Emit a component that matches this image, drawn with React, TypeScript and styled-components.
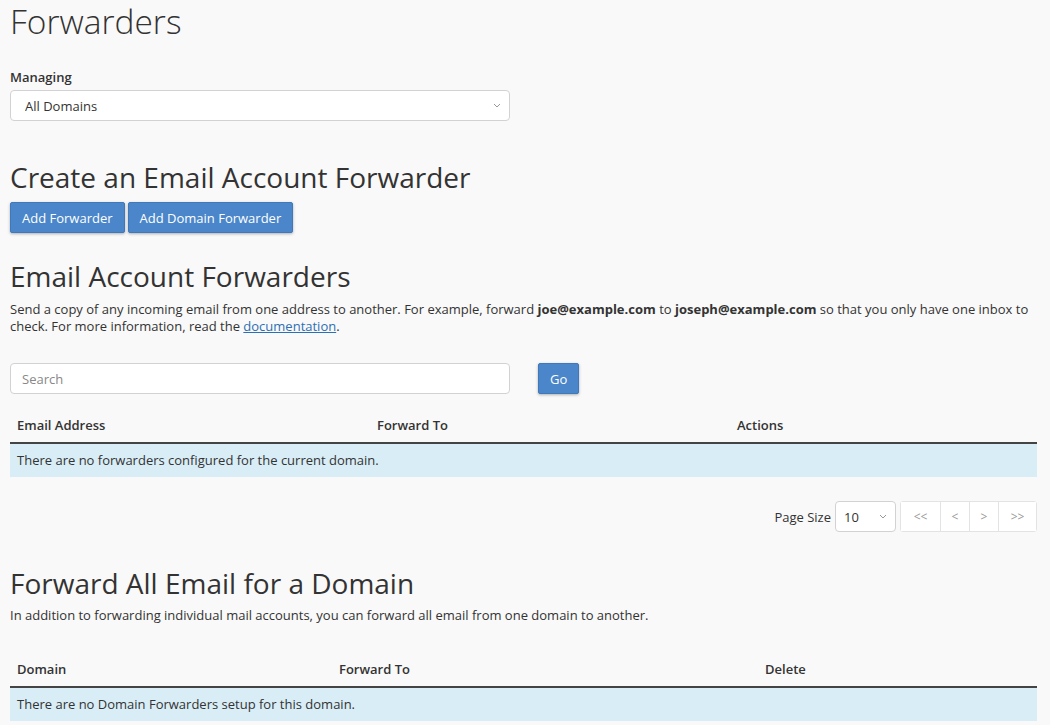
import React, { useState } from 'react';
import styled, { createGlobalStyle } from 'styled-components';

const GlobalStyle = createGlobalStyle`
  html, body {
    margin: 0;
    padding: 0;
    background-color: #f9f9f9;
    color: #333;
    font-family: "Open Sans", "Noto Sans", Arial, sans-serif;
    font-size: 13px;
  }
  * { box-sizing: border-box; }
`;

const Page = styled.main`
  width: 1027px;
  margin-left: 10px;
  padding-top: 1px;
`;

const Title = styled.h1`
  margin: 0;
  font-size: 33.5px;
  font-weight: 300;
  line-height: 41px;
`;

const Field = styled.div`
  margin-top: 26px;
  display: flex;
  flex-direction: column;
  gap: 4px;
`;

const Label = styled.label`
  font-weight: 600;
  line-height: 18px;
`;

const Select = styled.select<{ $width: number }>`
  appearance: none;
  width: ${p => p.$width}px;
  height: 31px;
  padding: 0 24px 0 ${p => (p.$width > 100 ? 14 : 8)}px;
  border: 1px solid #d2d2d2;
  border-radius: 4px;
  background-color: #fff;
  background-image: url("data:image/svg+xml,%3Csvg xmlns='http://www.w3.org/2000/svg' width='8' height='5' viewBox='0 0 8 5'%3E%3Cpath d='M1 1l3 3 3-3' fill='none' stroke='%23999' stroke-width='1'/%3E%3C/svg%3E");
  background-repeat: no-repeat;
  background-position: right 8px center;
  color: #333;
  font-family: inherit;
  font-size: 13px;
`;

const Heading = styled.h2<{ $top: number }>`
  margin: ${p => p.$top}px 0 0;
  font-size: 28px;
  font-weight: 400;
  line-height: 31px;
`;

const ButtonRow = styled.div`
  display: flex;
  gap: 3px;
  margin-top: 9px;
`;

const PrimaryButton = styled.button`
  height: 31px;
  padding: 0 11px;
  border: 1px solid #3f79bb;
  border-radius: 2px;
  background-color: #4a86c9;
  color: #fff;
  font-family: inherit;
  font-size: 13px;
  box-shadow: 0 1px 3px rgba(0, 0, 0, 0.3);
  cursor: pointer;
`;

const Text = styled.p<{ $top: number }>`
  margin: ${p => p.$top}px 0 0;
  line-height: 17px;
`;

const Link = styled.a`
  color: #2d6fb4;
  text-decoration: underline;
`;

const SearchRow = styled.div`
  display: flex;
  align-items: center;
  gap: 28px;
  margin-top: 28px;
`;

const SearchInput = styled.input`
  width: 500px;
  height: 31px;
  padding: 0 11px;
  border: 1px solid #d2d2d2;
  border-radius: 4px;
  background: #fff;
  font-family: inherit;
  font-size: 13px;
  color: #333;
  &::placeholder { color: #888; }
`;

const Table = styled.table<{ $top: number }>`
  width: 100%;
  margin-top: ${p => p.$top}px;
  border-collapse: collapse;
  table-layout: fixed;
`;

const Th = styled.th<{ $width?: number }>`
  width: ${p => (p.$width ? `${p.$width}px` : 'auto')};
  text-align: left;
  font-weight: 600;
  padding: 9px 7px 8px;
  line-height: 18px;
  border-bottom: 2px solid #444;
`;

const EmptyCell = styled.td`
  background-color: #d9edf7;
  padding: 7px 7px 8px;
  line-height: 18px;
`;

const Pager = styled.div`
  display: flex;
  justify-content: flex-end;
  align-items: center;
  margin-top: 24px;
`;

const PageLabel = styled.span`
  margin-right: 4px;
`;

const PagerGroup = styled.div`
  display: flex;
  margin-left: 4px;
  border: 1px solid #e3e3e3;
  border-radius: 3px;
  background: #fff;
`;

const PagerButton = styled.button<{ $width: number }>`
  width: ${p => p.$width}px;
  height: 29px;
  border: none;
  border-left: 1px solid #e3e3e3;
  background: #fff;
  color: #999;
  font-family: inherit;
  font-size: 12px;
  &:first-child { border-left: none; }
`;

export default function App() {
  const [domain, setDomain] = useState('all');
  const [pageSize, setPageSize] = useState('10');

  return (
    <>
      <GlobalStyle />
      <Page>
        <Title>Forwarders</Title>

        <Field>
          <Label htmlFor="managing">Managing</Label>
          <Select id="managing" $width={500} value={domain} onChange={e => setDomain(e.target.value)}>
            <option value="all">All Domains</option>
          </Select>
        </Field>

        <Heading $top={41}>Create an Email Account Forwarder</Heading>
        <ButtonRow>
          <PrimaryButton>Add Forwarder</PrimaryButton>
          <PrimaryButton>Add Domain Forwarder</PrimaryButton>
        </ButtonRow>

        <Heading $top={28}>Email Account Forwarders</Heading>
        <Text $top={9}>
          Send a copy of any incoming email from one address to another. For example, forward{' '}
          <b>joe@example.com</b> to <b>joseph@example.com</b> so that you only have one inbox to
          check. For more information, read the <Link href="#">documentation</Link>.
        </Text>

        <SearchRow>
          <SearchInput placeholder="Search" />
          <PrimaryButton>Go</PrimaryButton>
        </SearchRow>

        <Table $top={13}>
          <thead>
            <tr>
              <Th $width={360}>Email Address</Th>
              <Th $width={360}>Forward To</Th>
              <Th>Actions</Th>
            </tr>
          </thead>
          <tbody>
            <tr>
              <EmptyCell colSpan={3}>There are no forwarders configured for the current domain.</EmptyCell>
            </tr>
          </tbody>
        </Table>

        <Pager>
          <PageLabel>Page Size</PageLabel>
          <Select $width={61} value={pageSize} onChange={e => setPageSize(e.target.value)}>
            <option value="10">10</option>
            <option value="20">20</option>
          </Select>
          <PagerGroup>
            <PagerButton $width={39}>&lt;&lt;</PagerButton>
            <PagerButton $width={29}>&lt;</PagerButton>
            <PagerButton $width={29}>&gt;</PagerButton>
            <PagerButton $width={38}>&gt;&gt;</PagerButton>
          </PagerGroup>
        </Pager>

        <Heading $top={36}>Forward All Email for a Domain</Heading>
        <Text $top={8}>
          In addition to forwarding individual mail accounts, you can forward all email from one domain to another.
        </Text>

        <Table $top={27}>
          <thead>
            <tr>
              <Th $width={322}>Domain</Th>
              <Th $width={426}>Forward To</Th>
              <Th>Delete</Th>
            </tr>
          </thead>
          <tbody>
            <tr>
              <EmptyCell colSpan={3}>There are no Domain Forwarders setup for this domain.</EmptyCell>
            </tr>
          </tbody>
        </Table>
      </Page>
    </>
  );
}
